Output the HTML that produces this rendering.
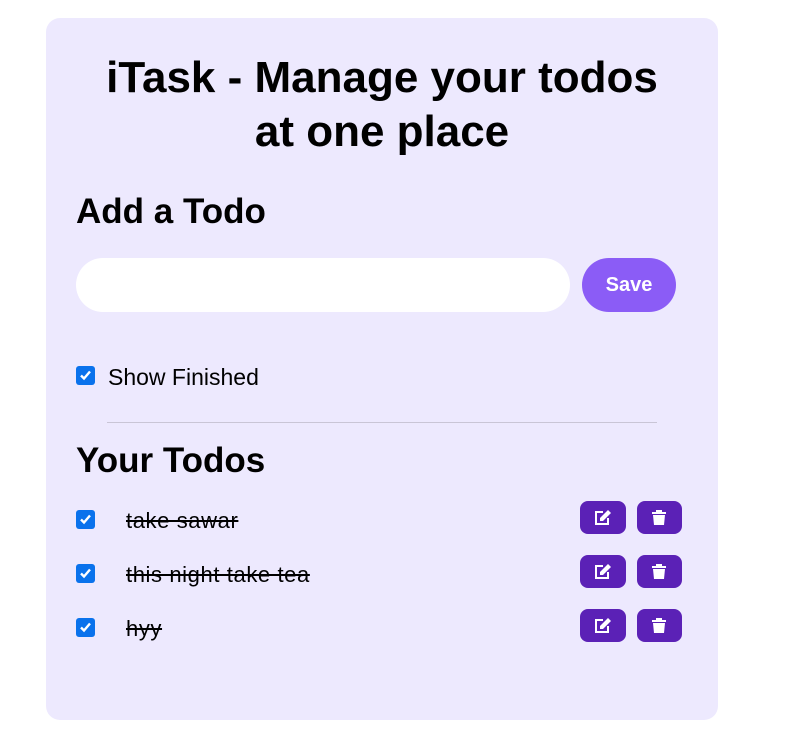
<!DOCTYPE html>
<html><head><style>
body{margin:0;width:802px;height:733px;background:#fff;font-family:"Liberation Sans",sans-serif;position:relative;overflow:hidden}
.card{position:absolute;left:46px;top:18px;width:672px;height:702px;background:#ede9fe;border-radius:14px}
.a{position:absolute;color:#000}
h1{margin:0;position:absolute;left:46px;width:672px;top:51px;text-align:center;font-size:44px;line-height:54px;font-weight:bold}
.cb{position:absolute;width:19px;height:19px;background:#0a72ec;border-radius:3px}
.cb svg{position:absolute;left:2px;top:2px}
.btn{position:absolute;width:46px;height:33px;background:#5b21b6;border-radius:8px}
.btn svg{position:absolute;left:14px;top:8px}
.t{position:absolute;left:126px;font-size:22px;letter-spacing:0.6px;text-decoration:line-through;line-height:24px}
</style></head><body>
<div class="card"></div>
<h1>iTask - Manage your todos<br>at one place</h1>
<div class="a" style="left:76px;top:192px;font-size:35px;font-weight:bold">Add a Todo</div>
<div style="position:absolute;left:76px;top:258px;width:494px;height:54px;background:#fff;border-radius:27px"></div>
<div style="position:absolute;left:582px;top:260px;width:94px;height:54px;background:#8b5cf6;border-radius:27px;color:#fff;font-weight:bold;font-size:20px;line-height:54px;text-align:center;top:258px">Save</div>
<div class="cb" style="left:76px;top:366px"><svg width="15" height="15" viewBox="0 0 15 15"><path d="M3 7.5l3 3 6-7" stroke="#fff" stroke-width="2.4" fill="none"/></svg></div>
<div class="a" style="left:108px;top:364px;font-size:23px">Show Finished</div>
<div style="position:absolute;left:107px;top:422px;width:550px;height:1px;background:#c9c5d6"></div>
<div class="a" style="left:76px;top:441px;font-size:35px;font-weight:bold">Your Todos</div>

<div class="cb" style="left:76px;top:510px"><svg width="15" height="15" viewBox="0 0 15 15"><path d="M3 7.5l3 3 6-7" stroke="#fff" stroke-width="2.4" fill="none"/></svg></div>
<div class="t" style="top:509px">take sawar</div>
<div class="cb" style="left:76px;top:564px"><svg width="15" height="15" viewBox="0 0 15 15"><path d="M3 7.5l3 3 6-7" stroke="#fff" stroke-width="2.4" fill="none"/></svg></div>
<div class="t" style="top:563px">this night take tea</div>
<div class="cb" style="left:76px;top:618px"><svg width="15" height="15" viewBox="0 0 15 15"><path d="M3 7.5l3 3 6-7" stroke="#fff" stroke-width="2.4" fill="none"/></svg></div>
<div class="t" style="top:617px">hyy</div>

<div class="btn" style="left:580px;top:501px"><svg width="18" height="17" viewBox="0 0 18 17"><path d="M9 3H2v12h12V9" stroke="#fff" stroke-width="2" fill="none"/><path d="M14 1l3 3-8 8H6V9z" fill="#fff"/></svg></div>
<div class="btn" style="left:637px;top:501px;width:45px"><svg width="16" height="17" viewBox="0 0 16 17"><path d="M5 1h6v2h4v2H1V3h4z" fill="#fff"/><path d="M2 6h12l-1 10H3z" fill="#fff"/></svg></div>
<div class="btn" style="left:580px;top:555px"><svg width="18" height="17" viewBox="0 0 18 17"><path d="M9 3H2v12h12V9" stroke="#fff" stroke-width="2" fill="none"/><path d="M14 1l3 3-8 8H6V9z" fill="#fff"/></svg></div>
<div class="btn" style="left:637px;top:555px;width:45px"><svg width="16" height="17" viewBox="0 0 16 17"><path d="M5 1h6v2h4v2H1V3h4z" fill="#fff"/><path d="M2 6h12l-1 10H3z" fill="#fff"/></svg></div>
<div class="btn" style="left:580px;top:609px"><svg width="18" height="17" viewBox="0 0 18 17"><path d="M9 3H2v12h12V9" stroke="#fff" stroke-width="2" fill="none"/><path d="M14 1l3 3-8 8H6V9z" fill="#fff"/></svg></div>
<div class="btn" style="left:637px;top:609px;width:45px"><svg width="16" height="17" viewBox="0 0 16 17"><path d="M5 1h6v2h4v2H1V3h4z" fill="#fff"/><path d="M2 6h12l-1 10H3z" fill="#fff"/></svg></div>
</body></html>
